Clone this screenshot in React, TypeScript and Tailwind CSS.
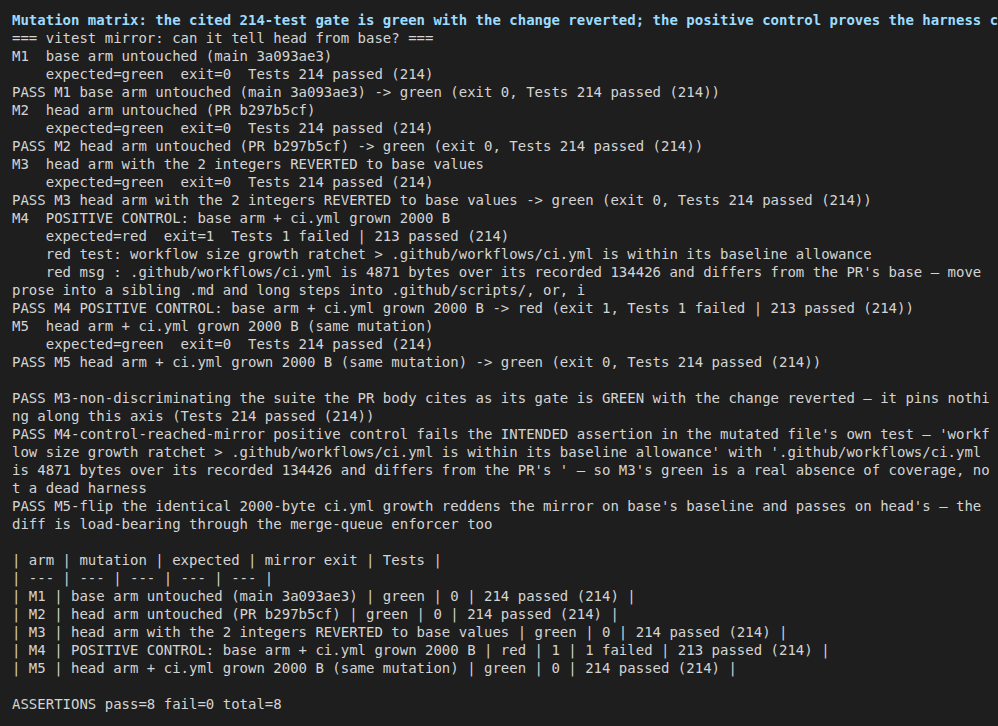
const title =
  "Mutation matrix: the cited 214-test gate is green with the change reverted; the positive control proves the harness c";

// terminal output, already wrapped at the terminal's 116 columns
const lines = [
  "=== vitest mirror: can it tell head from base? ===",
  "M1  base arm untouched (main 3a093ae3)",
  "    expected=green  exit=0  Tests 214 passed (214)",
  "PASS M1 base arm untouched (main 3a093ae3) -> green (exit 0, Tests 214 passed (214))",
  "M2  head arm untouched (PR b297b5cf)",
  "    expected=green  exit=0  Tests 214 passed (214)",
  "PASS M2 head arm untouched (PR b297b5cf) -> green (exit 0, Tests 214 passed (214))",
  "M3  head arm with the 2 integers REVERTED to base values",
  "    expected=green  exit=0  Tests 214 passed (214)",
  "PASS M3 head arm with the 2 integers REVERTED to base values -> green (exit 0, Tests 214 passed (214))",
  "M4  POSITIVE CONTROL: base arm + ci.yml grown 2000 B",
  "    expected=red  exit=1  Tests 1 failed | 213 passed (214)",
  "    red test: workflow size growth ratchet > .github/workflows/ci.yml is within its baseline allowance",
  "    red msg : .github/workflows/ci.yml is 4871 bytes over its recorded 134426 and differs from the PR's base — move",
  "prose into a sibling .md and long steps into .github/scripts/, or, i",
  "PASS M4 POSITIVE CONTROL: base arm + ci.yml grown 2000 B -> red (exit 1, Tests 1 failed | 213 passed (214))",
  "M5  head arm + ci.yml grown 2000 B (same mutation)",
  "    expected=green  exit=0  Tests 214 passed (214)",
  "PASS M5 head arm + ci.yml grown 2000 B (same mutation) -> green (exit 0, Tests 214 passed (214))",
  "",
  "PASS M3-non-discriminating the suite the PR body cites as its gate is GREEN with the change reverted — it pins nothi",
  "ng along this axis (Tests 214 passed (214))",
  "PASS M4-control-reached-mirror positive control fails the INTENDED assertion in the mutated file's own test — 'workf",
  "low size growth ratchet > .github/workflows/ci.yml is within its baseline allowance' with '.github/workflows/ci.yml",
  "is 4871 bytes over its recorded 134426 and differs from the PR's ' — so M3's green is a real absence of coverage, no",
  "t a dead harness",
  "PASS M5-flip the identical 2000-byte ci.yml growth reddens the mirror on base's baseline and passes on head's — the",
  "diff is load-bearing through the merge-queue enforcer too",
  "",
  "| arm | mutation | expected | mirror exit | Tests |",
  "| --- | --- | --- | --- | --- |",
  "| M1 | base arm untouched (main 3a093ae3) | green | 0 | 214 passed (214) |",
  "| M2 | head arm untouched (PR b297b5cf) | green | 0 | 214 passed (214) |",
  "| M3 | head arm with the 2 integers REVERTED to base values | green | 0 | 214 passed (214) |",
  "| M4 | POSITIVE CONTROL: base arm + ci.yml grown 2000 B | red | 1 | 1 failed | 213 passed (214) |",
  "| M5 | head arm + ci.yml grown 2000 B (same mutation) | green | 0 | 214 passed (214) |",
  "",
  "ASSERTIONS pass=8 fail=0 total=8",
];

export default function App() {
  return (
    <div className="w-[998px] h-[726px] overflow-hidden bg-[#1e1e1e] pl-3 pt-[11px] font-['DejaVu_Sans_Mono',monospace] text-[14px] leading-[18px] text-[#d4d4d4]">
      <div className="whitespace-pre overflow-hidden font-bold text-[#9cdcfe]">{title}</div>
      {lines.map((line, i) => (
        <div key={i} className="whitespace-pre h-[18px]">
          {line}
        </div>
      ))}
    </div>
  );
}
